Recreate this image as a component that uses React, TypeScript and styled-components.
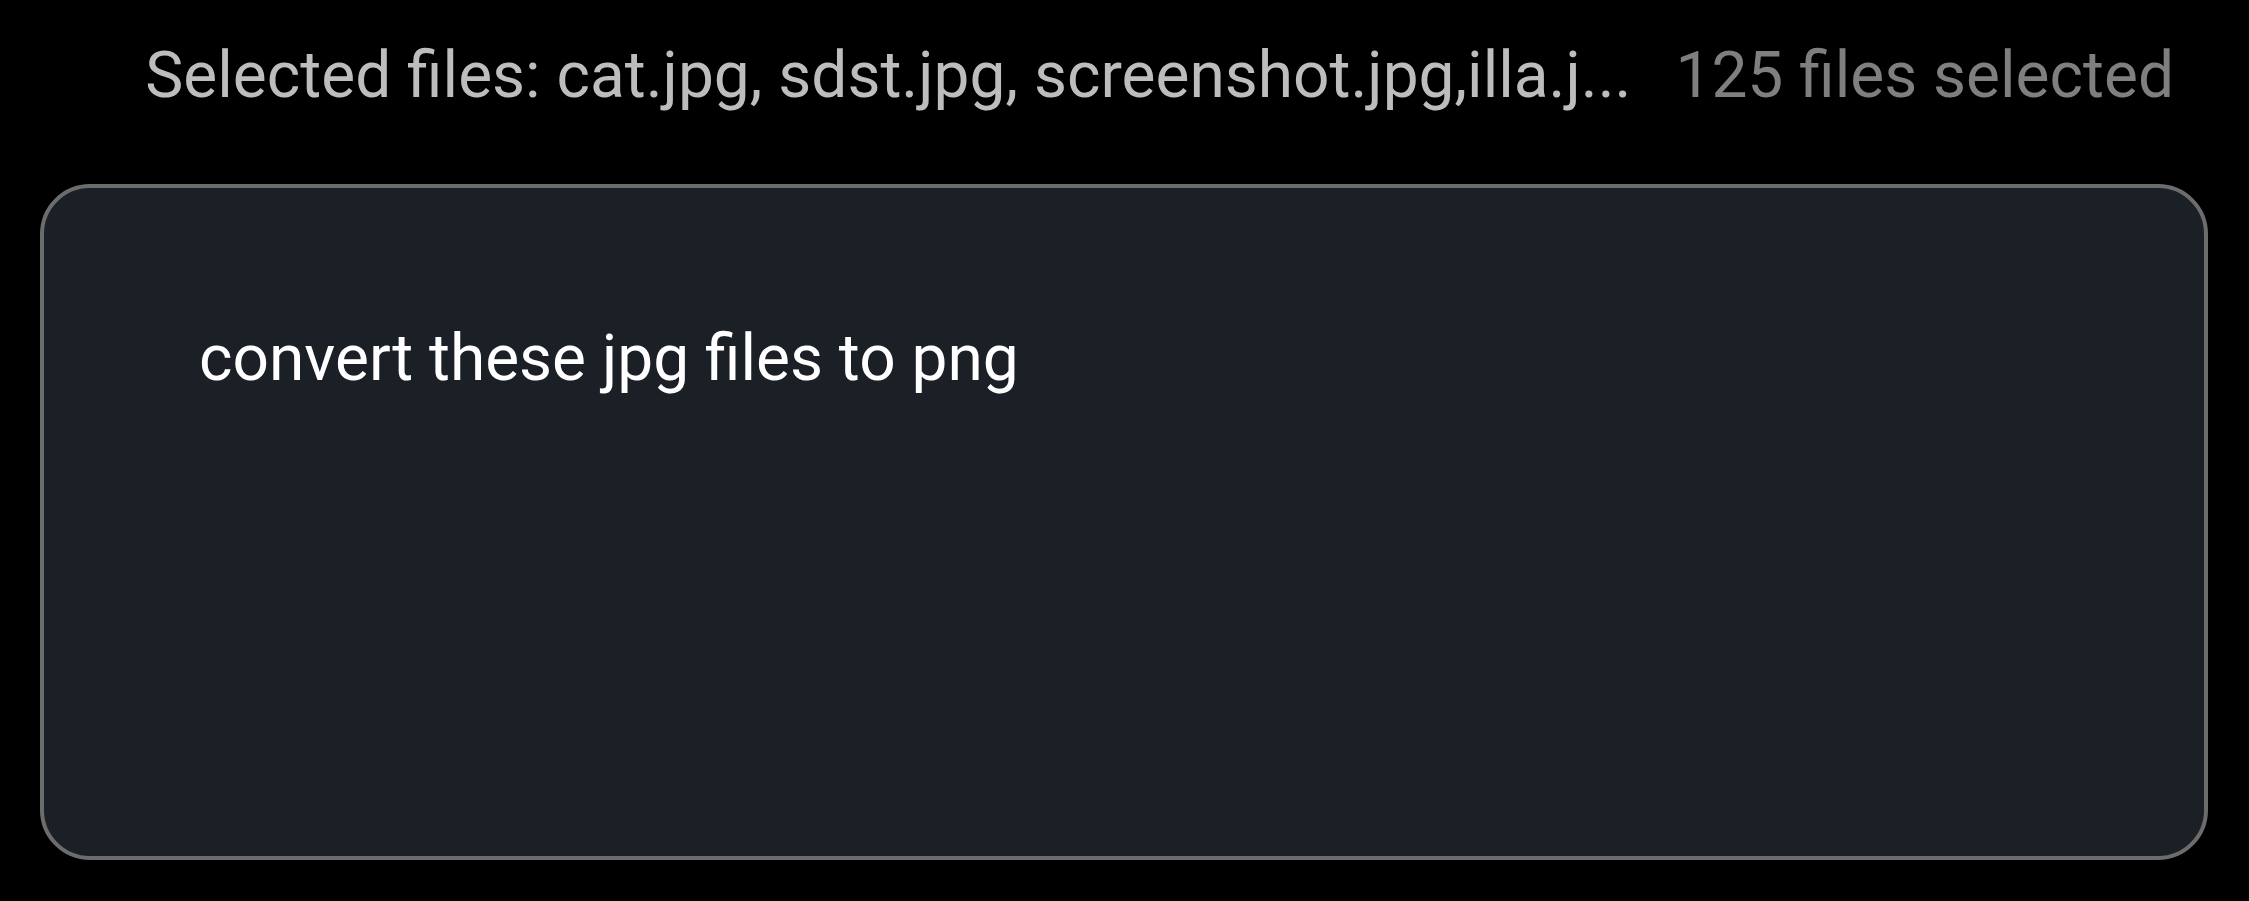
import React from "react";
import styled, {createGlobalStyle} from "styled-components";

const GlobalStyle = createGlobalStyle`
    html, body {
        margin: 0;
        padding: 0;
        background: #000000;
    }

    body {
        font-family: Roboto, "Noto Sans", "Liberation Sans", sans-serif;
    }
`

const Page = styled.div`
    display: flex;
    flex-direction: column;
    padding: 38px 41px 0 40px;
    gap: 71px;
`

const SelectionBar = styled.div`
    display: flex;
    justify-content: flex-end;
    align-items: baseline;
    gap: 44px;
    padding-right: 34px;
    font-size: 64px;
    line-height: 75px;
    white-space: nowrap;
`

const FileList = styled.span`
    color: #bdbdbd;
`

const FileCount = styled.span`
    color: #7f7f7f;
`

const PromptBox = styled.textarea`
    box-sizing: border-box;
    height: 676px;
    width: 100%;
    margin: 0;
    padding: 133px 150px 0 155px;
    background: #1b1f26;
    border: 4px solid #6c6c6c;
    border-radius: 50px;
    color: #ffffff;
    font-family: Roboto, "Noto Sans", "Liberation Sans", sans-serif;
    font-size: 64px;
    line-height: 75px;
    resize: none;
    outline: none;
    overflow: hidden;
`

export default function App() {
    const files = ["cat.jpg", "sdst.jpg", "screenshot.jpg"]

    return (
        <>
            <GlobalStyle/>
            <Page>
                <SelectionBar>
                    <FileList>Selected files: {files.join(", ")},illa.j...</FileList>
                    <FileCount>125 files selected</FileCount>
                </SelectionBar>
                <PromptBox defaultValue="convert these jpg files to png" readOnly/>
            </Page>
        </>
    )
}
